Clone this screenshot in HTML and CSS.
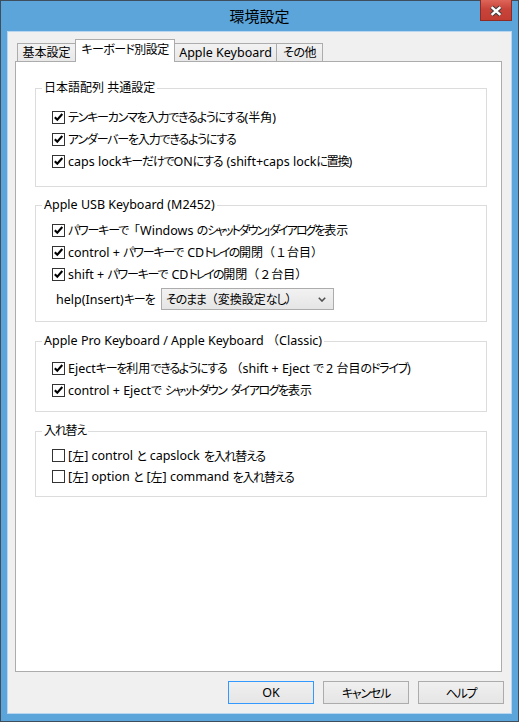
FILE: index.html
```html
<!DOCTYPE html>
<html lang="ja">
<head>
<meta charset="utf-8">
<title>環境設定</title>
<link rel="stylesheet" href="styles.css">
</head>
<body>
<div class="window">
  <div class="titlebar">
    <span></span>
    <span class="title">環境設定</span>
    <span class="close">
      <svg width="32" height="21" viewBox="0 0 32 21">
        <path d="M12 7 L21 15 M21 7 L12 15" stroke="#3b3b3b" stroke-width="4.6" fill="none"/>
        <path d="M12 7 L21 15 M21 7 L12 15" stroke="#ffffff" stroke-width="2.6" fill="none"/>
      </svg>
    </span>
  </div>
  <div class="client">
    <div class="tabs">
      <div class="tab t1"><span class="k">基本設定</span></div>
      <div class="tab active t2"><span class="j">キーボード別設定</span></div>
      <div class="tab t3">Apple Keyboard</div>
      <div class="tab t4"><span class="j">その他</span></div>
    </div>
    <div class="panel">
      <div class="group g1">
        <div class="legend"><span class="k">日本語配列</span> <span class="k">共通設定</span></div>
        <div class="row"><span class="cb"><svg width="11" height="11" viewBox="0 0 11 11"><path d="M1.8 5.2 L4.3 7.8 L9.3 2" stroke="#000" stroke-width="2.1" fill="none"/></svg></span><span class="j">テンキーカンマを入力できるようにする</span>(<span class="k">半角</span>)</div>
        <div class="row"><span class="cb"><svg width="11" height="11" viewBox="0 0 11 11"><path d="M1.8 5.2 L4.3 7.8 L9.3 2" stroke="#000" stroke-width="2.1" fill="none"/></svg></span><span class="j">アンダーバーを入力できるようにする</span></div>
        <div class="row"><span class="cb"><svg width="11" height="11" viewBox="0 0 11 11"><path d="M1.8 5.2 L4.3 7.8 L9.3 2" stroke="#000" stroke-width="2.1" fill="none"/></svg></span>caps lock<span class="j">キーだけで</span>ON<span class="j">にする</span><span class="gap">(shift+caps lock</span><span class="j">に置換</span>)</div>
      </div>
      <div class="group g2">
        <div class="legend">Apple USB Keyboard (M2452)</div>
        <div class="row"><span class="cb"><svg width="11" height="11" viewBox="0 0 11 11"><path d="M1.8 5.2 L4.3 7.8 L9.3 2" stroke="#000" stroke-width="2.1" fill="none"/></svg></span><span class="j">パワーキーで</span><span class="fw">「</span>Windows <span class="j">の</span><span class="n">シャットダウン」ダイアログ</span><span class="j">を</span><span class="k">表示</span></div>
        <div class="row"><span class="cb"><svg width="11" height="11" viewBox="0 0 11 11"><path d="M1.8 5.2 L4.3 7.8 L9.3 2" stroke="#000" stroke-width="2.1" fill="none"/></svg></span>control + <span class="j">パワーキーで</span><span class="gap">CD</span><span class="n">トレイ</span><span class="j">の</span><span class="k">開閉</span><span class="fw">（１</span><span class="k">台目</span><span class="fw">）</span></div>
        <div class="row"><span class="cb"><svg width="11" height="11" viewBox="0 0 11 11"><path d="M1.8 5.2 L4.3 7.8 L9.3 2" stroke="#000" stroke-width="2.1" fill="none"/></svg></span>shift + <span class="j">パワーキーで</span><span class="gap">CD</span><span class="n">トレイ</span><span class="j">の</span><span class="k">開閉</span><span class="fw">（２</span><span class="k">台目</span><span class="fw">）</span></div>
        <div class="helprow">
          <span class="helplabel">help(Insert)<span class="j">キーを</span></span>
          <span class="select"><span class="seltext"><span class="j">そのまま</span><span class="fw">（</span><span class="k">変換設定</span><span class="j">なし</span><span class="fw">）</span></span>
            <svg class="chev" width="8" height="5" viewBox="0 0 8 5"><path d="M0.8 0.8 L4 4 L7.2 0.8" stroke="#505050" stroke-width="1.6" fill="none"/></svg>
          </span>
        </div>
      </div>
      <div class="group g3">
        <div class="legend">Apple Pro Keyboard / Apple Keyboard <span class="fw">（</span>Classic)</div>
        <div class="row"><span class="cb"><svg width="11" height="11" viewBox="0 0 11 11"><path d="M1.8 5.2 L4.3 7.8 L9.3 2" stroke="#000" stroke-width="2.1" fill="none"/></svg></span>Eject<span class="j">キーを</span><span class="k">利用</span><span class="j">できるようにする</span><span class="gap fw">（</span>shift + Eject <span class="j">で</span> 2 <span class="k">台目</span><span class="j">のドライブ</span>)</div>
        <div class="row"><span class="cb"><svg width="11" height="11" viewBox="0 0 11 11"><path d="M1.8 5.2 L4.3 7.8 L9.3 2" stroke="#000" stroke-width="2.1" fill="none"/></svg></span>control + Eject<span class="j">で</span><span class="n2 gap">シャットダウン</span><span class="n2 gap">ダイアログ</span><span class="j">を</span><span class="k">表示</span></div>
      </div>
      <div class="group g4">
        <div class="legend"><span class="j">入れ替え</span></div>
        <div class="row"><span class="cb"></span>[<span class="k">左</span>] control <span class="j">と</span><span class="gap">capslock</span><span class="j gap">を入れ替える</span></div>
        <div class="row"><span class="cb"></span>[<span class="k">左</span>] option <span class="j">と</span><span class="gap">[</span><span class="k">左</span>] command <span class="j">を入れ替える</span></div>
      </div>
    </div>
    <div class="buttons">
      <div class="btn default">OK</div>
      <div class="btn"><span class="j">キャンセル</span></div>
      <div class="btn"><span class="j">ヘルプ</span></div>
    </div>
  </div>
</div>
</body>
</html>
```
FILE: styles.css
```css
html, body {
  margin: 0;
  padding: 0;
}
body {
  width: 519px;
  height: 722px;
  overflow: hidden;
  font-family: "Noto Sans", "Noto Sans CJK JP", sans-serif;
  font-size: 12.5px;
  color: #000;
  font-feature-settings: "palt";
}
.j {
  font-size: 12px;
  letter-spacing: -1.2px;
}
.k {
  font-size: 12px;
  letter-spacing: 0;
}
.n {
  font-size: 12px;
  letter-spacing: -2px;
}
.n2 {
  font-size: 12px;
  letter-spacing: -1.5px;
}
.fw {
  font-size: 12px;
  font-feature-settings: normal;
}
.gap {
  margin-left: 4px;
}
.window {
  box-sizing: border-box;
  width: 519px;
  height: 722px;
  border: 1px solid #3f4e5d;
  background: #5ba5da;
  padding: 0 6px 7px 6px;
  display: flex;
  flex-direction: column;
}
.titlebar {
  height: 30px;
  flex: none;
  display: grid;
  grid-template-columns: 1fr auto 1fr;
  align-items: center;
}
.title {
  font-size: 15px;
  line-height: 30px;
  color: #000;
  font-feature-settings: normal;
}
.close {
  justify-self: end;
  align-self: start;
  margin-top: -1px;
  box-sizing: border-box;
  width: 32px;
  height: 21px;
  border: 1px solid #8e2c24;
  border-top: none;
  background: linear-gradient(#de6559, #c8443a 45%, #c23c32);
  display: flex;
}
.close svg {
  margin-left: -1px;
}
.client {
  flex: 1;
  border: 1px solid #b8d6ef;
  background: #f0f0f0;
  display: flex;
  flex-direction: column;
  padding: 7px 0 9px 0;
}
.tabs {
  height: 22px;
  display: flex;
  align-items: flex-end;
  padding-left: 9px;
}
.tab {
  box-sizing: border-box;
  height: 18px;
  border: 1px solid #acacac;
  border-bottom: none;
  background: linear-gradient(#f2f2f2, #e8e8e8);
  display: flex;
  align-items: center;
  justify-content: center;
  line-height: 16px;
  margin-left: -1px;
  white-space: nowrap;
}
.tab .j {
  letter-spacing: -0.6px;
}
.tab.t1 { width: 59px; margin-left: 0; }
.tab.t2 { width: 100px; }
.tab.t3 { width: 103px; }
.tab.t4 { width: 47px; }
.tab.active {
  height: 23px;
  margin-bottom: -1px;
  background: #fff;
  position: relative;
  z-index: 1;
  padding-bottom: 3px;
}
.panel {
  flex: 1;
  margin: 0 9px 0 7px;
  border: 1px solid #acacac;
  background: #fff;
  padding: 26px 14px 0 19px;
}
.group {
  border: 1px solid #dcdcdc;
}
.legend {
  width: fit-content;
  height: 16px;
  line-height: 16px;
  margin: -9px 0 0 6px;
  padding: 0 2px;
  background: #fff;
  white-space: pre;
}
.row {
  height: 22px;
  display: flex;
  align-items: center;
  padding-left: 16px;
  white-space: pre;
}
.cb {
  box-sizing: border-box;
  width: 13px;
  height: 13px;
  border: 1px solid #333;
  background: #fff;
  margin-right: 3px;
  flex: none;
  display: flex;
  align-items: center;
  justify-content: center;
}
.g1 { padding-bottom: 14px; }
.g1 .legend { margin-bottom: 10px; }
.g2 { margin-top: 18px; padding-bottom: 11px; }
.g2 .legend { margin-bottom: 6px; }
.g3 { margin-top: 19px; padding-bottom: 10px; }
.g3 .legend { margin-bottom: 8px; }
.g4 { margin-top: 19px; padding-bottom: 9px; }
.g4 .legend { margin-bottom: 6px; }
.g4 .row { height: 21px; }
.helprow {
  margin-top: 3px;
  height: 22px;
  display: flex;
  align-items: center;
  padding-left: 20px;
}
.helplabel {
  width: 105px;
  white-space: nowrap;
}
.select {
  box-sizing: border-box;
  width: 173px;
  height: 22px;
  border: 1px solid #acacac;
  background: linear-gradient(#f2f2f2, #e5e5e5);
  display: flex;
  align-items: center;
  padding: 0 7px 0 4px;
}
.seltext {
  flex: 1;
  white-space: nowrap;
}
.chev {
  flex: none;
}
.buttons {
  margin-top: 9px;
  height: 23px;
  display: flex;
  justify-content: flex-end;
  gap: 9px;
  padding-right: 7px;
}
.btn {
  box-sizing: border-box;
  width: 86px;
  height: 23px;
  border: 1px solid #acacac;
  background: linear-gradient(#f0f0f0, #e5e5e5);
  display: flex;
  align-items: center;
  justify-content: center;
}
.btn.default {
  border-color: #3399ff;
}
```
